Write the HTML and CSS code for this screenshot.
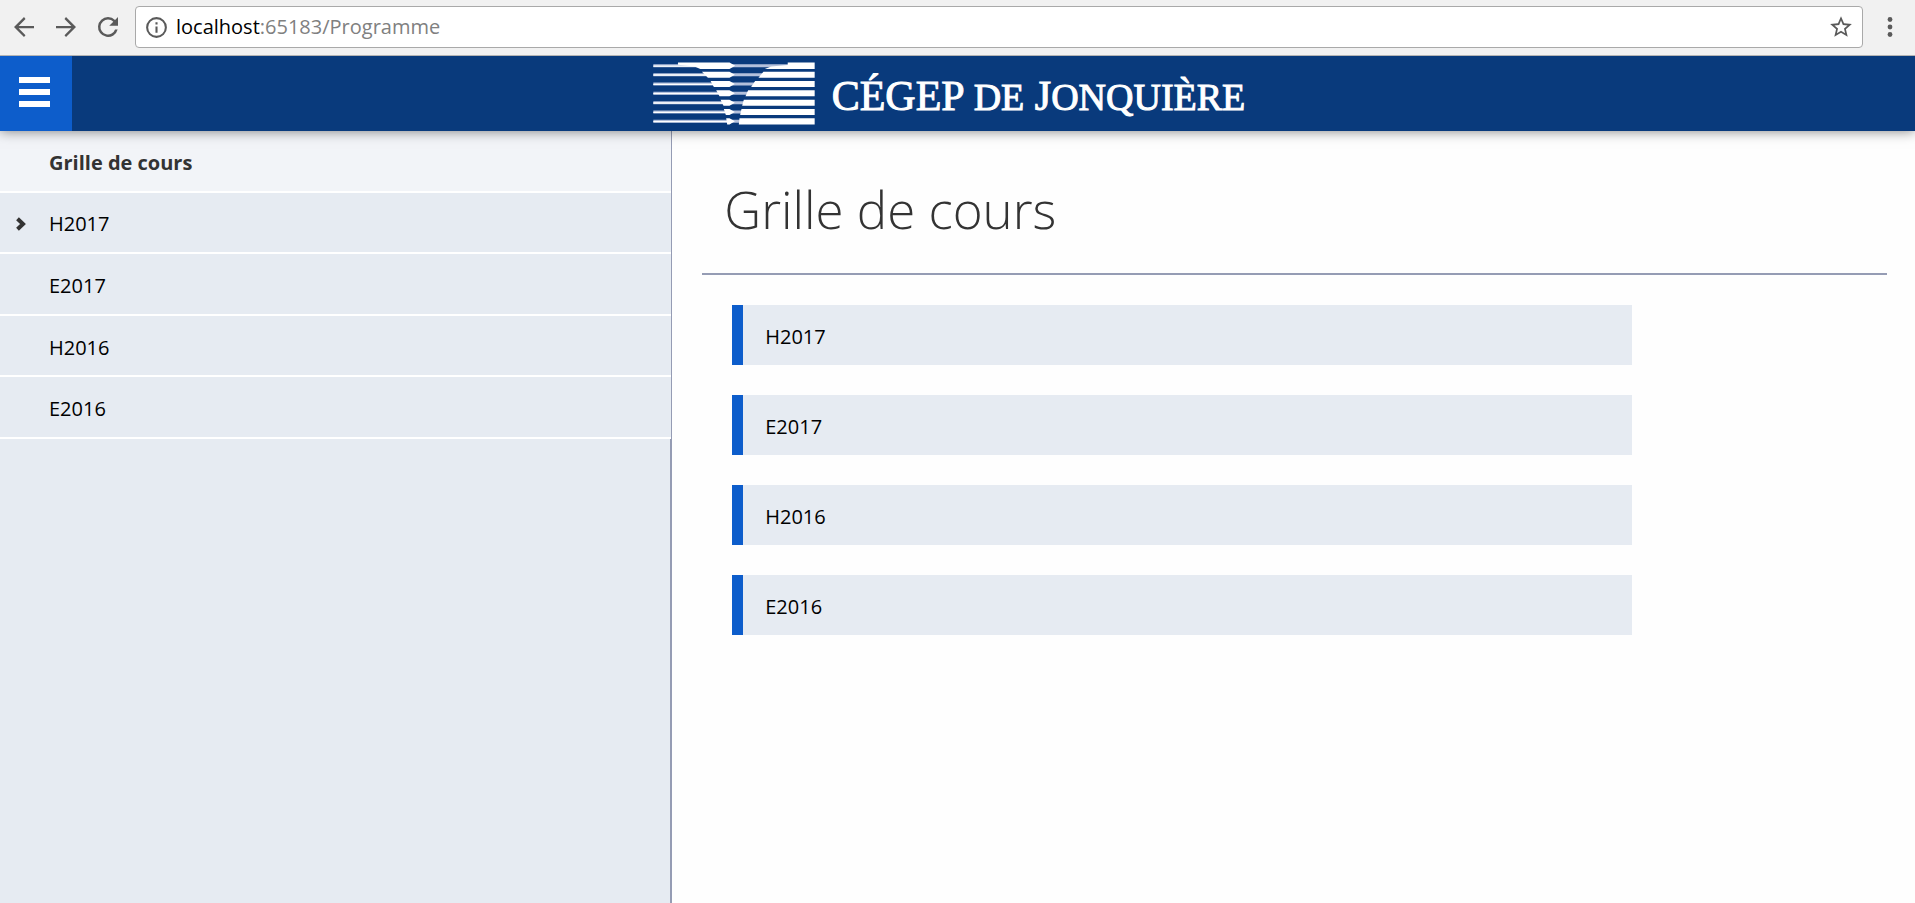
FILE: index.html
```html
<!DOCTYPE html>
<html lang="fr">
<head>
<meta charset="utf-8">
<meta name="viewport" content="width=device-width, initial-scale=1">
<title>Grille de cours</title>
<link rel="stylesheet" href="styles.css">
</head>
<body>
<div class="toolbar">
  <button class="tool" type="button" aria-label="Précédent"><svg viewBox="0 0 24 24"><path d="M20 11.1H7.7l5.500-5.600L12 4l-8 8 8 8 1.200-1.500-5.500-5.600H20z"/></svg></button>
  <button class="tool" type="button" aria-label="Suivant"><svg viewBox="0 0 24 24"><path d="M4 11.1h12.300l-5.500-5.600L12 4l8 8-8 8-1.200-1.500 5.500-5.600H4z"/></svg></button>
  <button class="tool" type="button" aria-label="Actualiser"><svg viewBox="0 0 24 24"><path d="M17.650 6.350A7.960 7.960 0 0 0 12 4a8 8 0 1 0 7.730 10h-2.080A6 6 0 1 1 12 6c1.660 0 3.140.690 4.220 1.780L13 11h7V4z"/></svg></button>
  <div class="address">
    <svg class="info" viewBox="0 0 24 24"><path d="M11 7h2v2h-2zm0 4h2v6h-2zm1-9a10 10 0 1 0 0 20 10 10 0 0 0 0-20zm0 18a8 8 0 1 1 0-16 8 8 0 0 1 0 16z"/></svg>
    <div class="url" role="textbox" aria-label="Adresse"><span class="host">localhost</span>:65183/Programme</div>
    <button class="star" type="button" aria-label="Ajouter aux favoris"><svg viewBox="0 0 24 24"><path d="M22 9.240l-7.190-.620L12 2 9.190 8.630 2 9.240l5.460 4.730L5.820 21 12 17.270 18.180 21l-1.630-7.030zM12 15.400l-3.760 2.270 1-4.280-3.320-2.880 4.380-.380L12 6.100l1.710 4.040 4.380.380-3.320 2.880 1 4.280z"/></svg></button>
  </div>
  <button class="more" type="button" aria-label="Menu du navigateur"><svg viewBox="0 0 6 20"><circle cx="3" cy="2.500" r="2.400"/><circle cx="3" cy="10" r="2.400"/><circle cx="3" cy="17.500" r="2.400"/></svg></button>
</div>

<header class="header">
  <button class="menu" type="button" aria-label="Menu"><span class="bar"></span><span class="bar"></span><span class="bar"></span></button>
  <a class="logo" href="#">
    <svg class="mark" viewBox="40 36 487 189" aria-hidden="true">
      <path class="halo" d="M41 47H500M41 74H500M41 102H500M41 130H500M41 158H500M41 186H500M41 214H500"/>
      <path class="line" d="M41 48H270M41 75H270M41 103H270M41 131H270M41 159H270M41 187H270M41 215H270"/>
      <g class="solid">
        <path d="M115 37H270L287 47 270 57H182L165 49 115 44zM445 37H526V57H376L395 49 445 45z"/>
        <path d="M187 65H270L286 74 270 83H205zM372 65H526V83H357z"/>
        <path d="M213 93H270L286 102 270 111H223zM347 93H526V111H335z"/>
        <path d="M230 121H270L286 130 270 139H240zM326 121H526V139H318z"/>
        <path d="M243 149H270L286 158 270 167H252zM313 149H526V167H308z"/>
        <path d="M253 177H270L286 186 270 195H259zM306 177H526V195H302z"/>
        <path d="M260 205H270L286 214 270 224H263zM300 205H526V224H298z"/>
      </g>
    </svg>
    <span class="wordmark">CÉGEP <span class="small">DE</span> J<span class="small">ONQUIÈRE</span></span>
  </a>
</header>

<div class="layout">
  <nav class="sidebar" aria-label="Grille de cours">
    <ul class="nav">
      <li class="nav-item"><a class="nav-link current" href="#">Grille de cours</a></li>
      <li class="nav-item"><a class="nav-link" href="#"><svg class="chevron" viewBox="0 0 10 14"><path d="M1.500 1.800L7 7l-5.500 5.200"/></svg>H2017</a></li>
      <li class="nav-item"><a class="nav-link" href="#">E2017</a></li>
      <li class="nav-item"><a class="nav-link" href="#">H2016</a></li>
      <li class="nav-item"><a class="nav-link" href="#">E2016</a></li>
    </ul>
  </nav>
  <main class="content">
    <h1 class="title">Grille de cours</h1>
    <ul class="terms">
      <li><a class="term" href="#">H2017</a></li>
      <li><a class="term" href="#">E2017</a></li>
      <li><a class="term" href="#">H2016</a></li>
      <li><a class="term" href="#">E2016</a></li>
    </ul>
  </main>
</div>
</body>
</html>
```

FILE: styles.css
```css
* {
  box-sizing: border-box;
}

body {
  margin: 0;
  min-height: 100vh;
  display: flex;
  flex-direction: column;
  background: #fefefe;
  color: #000;
  font: 20px/28px "Open Sans", "Noto Sans", sans-serif;
}

button {
  display: flex;
  padding: 0;
  border: 0;
  background: none;
  cursor: pointer;
}

a {
  color: inherit;
  text-decoration: none;
}

ul {
  margin: 0;
  padding: 0;
  list-style: none;
}

.toolbar {
  position: relative;
  z-index: 2;
  display: flex;
  align-items: center;
  gap: 12px;
  padding: 6px 22px 7px 9px;
  border-bottom: 1px solid #b4b4b4;
  background: #f1f1f1;
  fill: #5a5a5a;
}

.tool svg {
  width: 30px;
  height: 30px;
}

.address {
  flex: 1;
  display: flex;
  align-items: center;
  height: 42px;
  padding: 0 8px;
  border: 1px solid #a9a9a9;
  border-radius: 4px;
  background: #fff;
}

.info {
  width: 25px;
  height: 25px;
  margin-right: 7px;
}

.url {
  flex: 1;
  color: #808080;
}

.host {
  color: #000;
}

.star svg {
  width: 26px;
  height: 26px;
}

.more {
  margin-left: 12px;
}

.more svg {
  width: 6px;
  height: 20px;
}

.header {
  position: relative;
  z-index: 1;
  display: grid;
  grid-template-columns: 72px 1fr 72px;
  height: 75px;
  background: #093a7c;
  box-shadow: 0 0 12px rgba(0, 0, 0, 0.5);
}

.menu {
  flex-direction: column;
  align-items: flex-start;
  gap: 6px;
  padding: 21px 19px;
  background: #0d5dcb;
}

.bar {
  width: 31px;
  height: 6px;
  background: #fff;
}

.logo {
  display: flex;
  align-items: center;
  justify-content: center;
  gap: 17px;
  padding-right: 17px;
  color: #fff;
}

.mark {
  width: 162px;
  height: 63px;
}

.halo {
  fill: none;
  stroke: #b3c0db;
  stroke-width: 9;
}

.line {
  fill: none;
  stroke: #fff;
  stroke-width: 4;
}

.solid {
  fill: #fff;
}

.wordmark {
  padding-top: 6px;
  font: 42px/60px "Liberation Serif", serif;
  -webkit-text-stroke: 1px #fff;
  white-space: nowrap;
}

.small {
  font-size: 38px;
}

.layout {
  flex: 1;
  display: flex;
}

.sidebar {
  width: 35%;
  min-width: 240px;
  border-right: 2px solid #959cb4;
  background: #e6ebf2;
  box-sizing: content-box;
}

.nav {
  display: grid;
  grid-auto-rows: 1fr;
  min-height: 308px;
  margin-right: -1px;
}

.nav-item {
  display: flex;
  border-bottom: 2px solid #fff;
  background: #e6ebf2;
}

.nav-link {
  position: relative;
  flex: 1;
  display: flex;
  align-items: center;
  padding: 4px 49px 0;
}

.current {
  background: #f2f4f8;
  color: #333;
  font-weight: 700;
}

.chevron {
  position: absolute;
  left: 16px;
  width: 10px;
  height: 14px;
  fill: none;
  stroke: #333;
  stroke-width: 4;
}

.content {
  flex: 1;
  padding: 0 28px 0 30px;
}

.title {
  margin: 0 0 30px;
  padding: 42px 22px 28px;
  border-bottom: 2px solid #959cb4;
  color: #333;
  font-size: 51px;
  line-height: 72px;
  font-weight: 300;
}

.terms {
  display: grid;
  gap: 30px;
  max-width: 930px;
  padding-left: 30px;
}

.term {
  display: block;
  padding: 18px 22px 14px;
  border-left: 11px solid #0d5dcb;
  background: #e6ebf2;
}
```
